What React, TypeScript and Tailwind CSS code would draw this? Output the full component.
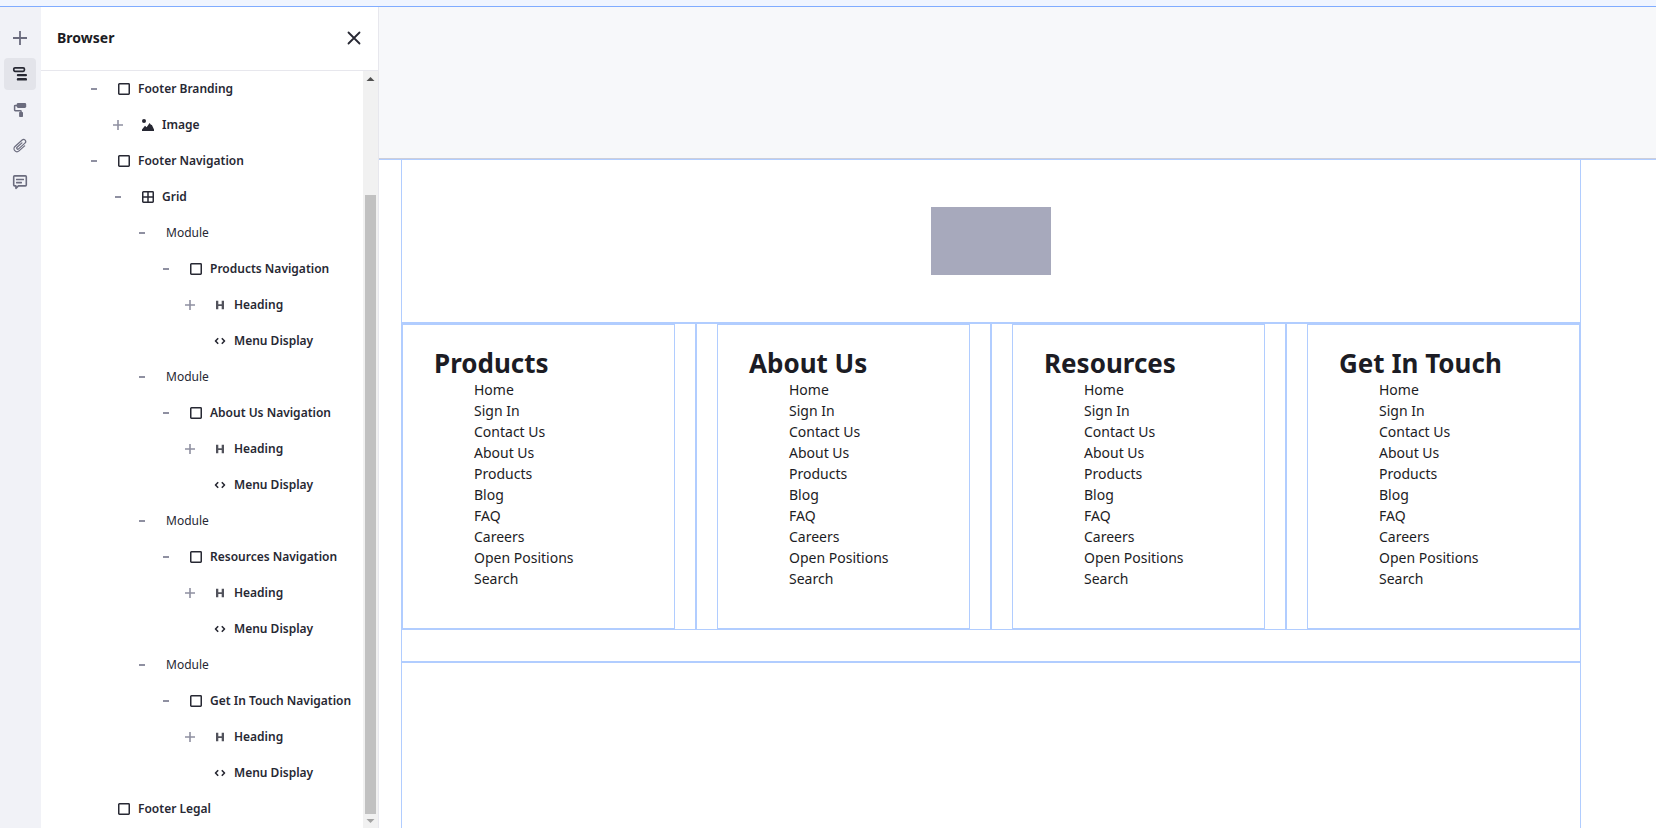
import React from "react";

type IconKind = "container" | "image" | "grid" | "heading" | "code";

type TreeNode = {
  label: string;
  depth: number;
  toggle?: "open" | "closed";
  icon?: IconKind;
};

const moduleNodes = (label: string): TreeNode[] => [
  { label: "Module", depth: 2, toggle: "open" },
  { label, depth: 3, toggle: "open", icon: "container" },
  { label: "Heading", depth: 4, toggle: "closed", icon: "heading" },
  { label: "Menu Display", depth: 4, icon: "code" },
];

const nodes: TreeNode[] = [
  { label: "Footer Branding", depth: 0, toggle: "open", icon: "container" },
  { label: "Image", depth: 1, toggle: "closed", icon: "image" },
  { label: "Footer Navigation", depth: 0, toggle: "open", icon: "container" },
  { label: "Grid", depth: 1, toggle: "open", icon: "grid" },
  ...moduleNodes("Products Navigation"),
  ...moduleNodes("About Us Navigation"),
  ...moduleNodes("Resources Navigation"),
  ...moduleNodes("Get In Touch Navigation"),
  { label: "Footer Legal", depth: 0, icon: "container" },
];

const indents = ["pl-[45px]", "pl-[69px]", "pl-[93px]", "pl-[117px]", "pl-[141px]"];

const columns = ["Products", "About Us", "Resources", "Get In Touch"];

const links = [
  "Home",
  "Sign In",
  "Contact Us",
  "About Us",
  "Products",
  "Blog",
  "FAQ",
  "Careers",
  "Open Positions",
  "Search",
];

const tools = [
  {
    label: "Fragments and Widgets",
    icon: <path d="M7.1 1h1.8v6.1H15v1.8H8.9V15H7.1V8.9H1V7.1h6.1z" />,
  },
  {
    label: "Browser",
    icon: (
      <>
        <rect x="1.8" y="1.8" width="10.6" height="3.5" rx="1.2" fill="none" stroke="currentColor" strokeWidth="1.7" />
        <rect x="4.8" y="8" width="10.2" height="2.3" rx="1.1" />
        <rect x="4.8" y="12" width="10.2" height="2.6" rx="1.2" />
      </>
    ),
  },
  {
    label: "Page Design Options",
    icon: (
      <>
        <rect x="4.7" y="1" width="9.5" height="5" rx="1.4" />
        <path d="M5.2 3.4H3.3q-.7 0-.7.7v4q0 .7.7.7h5.2q.6 0 .6.6v1.4" fill="none" stroke="currentColor" strokeWidth="1.5" />
        <rect x="7.1" y="10" width="3.9" height="5" rx=".7" />
      </>
    ),
  },
  {
    label: "Page Contents",
    icon: (
      <path
        transform="rotate(48 8 8)"
        d="M11 4.5V12a3 3 0 0 1-6 0V2.4a2.1 2.1 0 0 1 4.2 0V11a1.1 1.1 0 0 1-2.2 0V4.5"
        fill="none"
        stroke="currentColor"
        strokeWidth="1.2"
        strokeLinecap="round"
        strokeLinejoin="round"
      />
    ),
  },
  {
    label: "Comments",
    icon: (
      <>
        <path d="M2.6 1.9h10.8q.9 0 .9.9v8.2q0 .9-.9.9H6.4L3.9 14.3v-2.4H2.6q-.9 0-.9-.9V2.8q0-.9.9-.9z" fill="none" stroke="currentColor" strokeWidth="1.6" strokeLinejoin="round" />
        <rect x="4" y="4.7" width="8" height="1.6" rx=".4" />
        <rect x="4" y="7.8" width="6" height="1.6" rx=".4" />
      </>
    ),
  },
];

function NodeIcon({ kind }: { kind: IconKind }) {
  return (
    <svg viewBox="0 0 12 12" className="size-3 shrink-0" fill="currentColor" aria-hidden="true">
      {kind === "container" && (
        <rect x=".75" y=".75" width="10.5" height="10.5" rx=".7" fill="none" stroke="currentColor" strokeWidth="1.5" />
      )}
      {kind === "grid" && (
        <>
          <rect x=".75" y=".75" width="10.5" height="10.5" rx=".7" fill="none" stroke="currentColor" strokeWidth="1.5" />
          <path d="M6 1v10M1 6h10" stroke="currentColor" strokeWidth="1.5" />
        </>
      )}
      {kind === "image" && (
        <>
          <circle cx="2" cy="2" r="2" />
          <path d="M0 12V10.6L3 6.8l1.6 1.4L7.6 4l1.5 2 .7-.3L12 10.6V12z" />
        </>
      )}
      {kind === "heading" && (
        <path d="M2 1.7h2.3v3.5h3.4V1.7H10v8.6H7.7V6.9H4.3v3.4H2z" fillOpacity=".8" />
      )}
      {kind === "code" && (
        <path
          d="M4.2 3.2 1.5 6l2.7 2.8M7.8 3.2 10.5 6 7.8 8.8"
          fill="none"
          stroke="currentColor"
          strokeWidth="1.6"
          strokeLinejoin="round"
        />
      )}
    </svg>
  );
}

function Toggle({ state, label }: { state?: "open" | "closed"; label: string }) {
  if (!state) return <span className="size-4 shrink-0" />;
  return (
    <button
      type="button"
      aria-label={`${state === "open" ? "Collapse" : "Expand"} ${label}`}
      className="flex size-4 shrink-0 items-center justify-center text-[#8f90a1]"
    >
      <svg viewBox="0 0 16 16" className="size-4" fill="currentColor" aria-hidden="true">
        {state === "open" ? (
          <rect x="5" y="7" width="6" height="2" />
        ) : (
          <path d="M7.2 3h1.6v4.2H13v1.6H8.8V13H7.2V8.8H3V7.2h4.2z" />
        )}
      </svg>
    </button>
  );
}

function TreeRow({ node }: { node: TreeNode }) {
  return (
    <li className={`flex h-9 items-center ${indents[node.depth]}`}>
      <Toggle state={node.toggle} label={node.label} />
      {node.icon ? (
        <span className="flex items-center gap-2 pl-4 font-semibold">
          <NodeIcon kind={node.icon} />
          {node.label}
        </span>
      ) : (
        <span className="pl-4">{node.label}</span>
      )}
    </li>
  );
}

function ToolRail() {
  return (
    <nav aria-label="Tools" className="flex w-[41px] shrink-0 flex-col gap-1 bg-[#f1f2f7] pt-[15px] pl-1">
      {tools.map((tool) => (
        <button
          key={tool.label}
          type="button"
          aria-label={tool.label}
          className={`flex size-8 items-center justify-center rounded ${
            tool.label === "Browser" ? "bg-[#e3e4ea] text-[#272833]" : "text-[#6b6c7e]"
          }`}
        >
          <svg viewBox="0 0 16 16" className="size-4" fill="currentColor" aria-hidden="true">
            {tool.icon}
          </svg>
        </button>
      ))}
    </nav>
  );
}

function ScrollTrack() {
  return (
    <div aria-hidden="true" className="flex w-[15px] shrink-0 flex-col items-center bg-[#f1f1f1]">
      <svg viewBox="0 0 15 14" className="h-3.5 w-[15px]" fill="#505050">
        <path d="M7.5 6 11.5 10h-8z" />
      </svg>
      <div className="mt-[110px] w-[11px] flex-1 bg-[#c1c1c1]" />
      <svg viewBox="0 0 15 14" className="h-3.5 w-[15px]" fill="#a3a3a3">
        <path d="M3.5 5h8l-4 4z" />
      </svg>
    </div>
  );
}

function BrowserPanel() {
  return (
    <aside className="flex w-[338px] shrink-0 flex-col border-r border-[#e7e7ed] bg-white">
      <header className="flex h-16 shrink-0 items-center justify-between border-b border-[#e7e7ed] px-4 pb-0.5">
        <h2 className="text-sm font-bold text-[#1c1c24]">Browser</h2>
        <button type="button" aria-label="Close" className="flex size-4 items-center justify-center text-[#272833]">
          <svg viewBox="0 0 16 16" className="size-4" aria-hidden="true">
            <path d="M2.5 2.5l11 11M13.5 2.5l-11 11" stroke="currentColor" strokeWidth="1.8" strokeLinecap="round" />
          </svg>
        </button>
      </header>
      <div className="flex min-h-0 flex-1">
        <ul className="min-w-0 flex-1 overflow-hidden text-xs whitespace-nowrap text-[#272833]">
          {nodes.map((node, index) => (
            <TreeRow key={index} node={node} />
          ))}
        </ul>
        <ScrollTrack />
      </div>
    </aside>
  );
}

function FooterColumn({ title }: { title: string }) {
  return (
    <div className="border-x border-[#b1cdff] px-5 first:pl-0 last:pr-0">
      <section className="border border-[#b1cdff] px-[31px] pt-[22px] pb-[39px]">
        <h2 className="text-[26px] leading-8 font-bold whitespace-nowrap">{title}</h2>
        <ul className="pl-10 text-sm leading-[21px]">
          {links.map((link) => (
            <li key={link}>
              <a href="#">{link}</a>
            </li>
          ))}
        </ul>
      </section>
    </div>
  );
}

function Canvas() {
  return (
    <div className="flex min-w-0 flex-1 flex-col bg-white text-[#1c1c24]">
      <div className="h-[152px] shrink-0 border-b border-[#cdced9] bg-[#f7f8fa]" />
      <footer className="flex flex-1 flex-col border-t border-[#b1cdff] pr-[75px] pl-[22px]">
        <div className="flex justify-center border-x border-b border-[#b1cdff] py-[47px]">
          <div role="img" aria-label="Logo" className="h-[68px] w-[120px] bg-[#a7a9bc]" />
        </div>
        <div className="grid grid-cols-4 border-y border-[#b1cdff]">
          {columns.map((title) => (
            <FooterColumn key={title} title={title} />
          ))}
        </div>
        <div className="h-8 shrink-0 border-x border-b border-[#b1cdff]" />
        <div className="flex-1 border-x border-t border-[#b1cdff]" />
      </footer>
    </div>
  );
}

export default function App() {
  return (
    <div className="flex h-screen flex-col overflow-hidden bg-white font-['Noto_Sans',sans-serif]">
      <div className="h-[7px] shrink-0 border-b border-[#80acff] bg-[#f0f5ff]" />
      <div className="flex min-h-0 flex-1">
        <ToolRail />
        <BrowserPanel />
        <Canvas />
      </div>
    </div>
  );
}
